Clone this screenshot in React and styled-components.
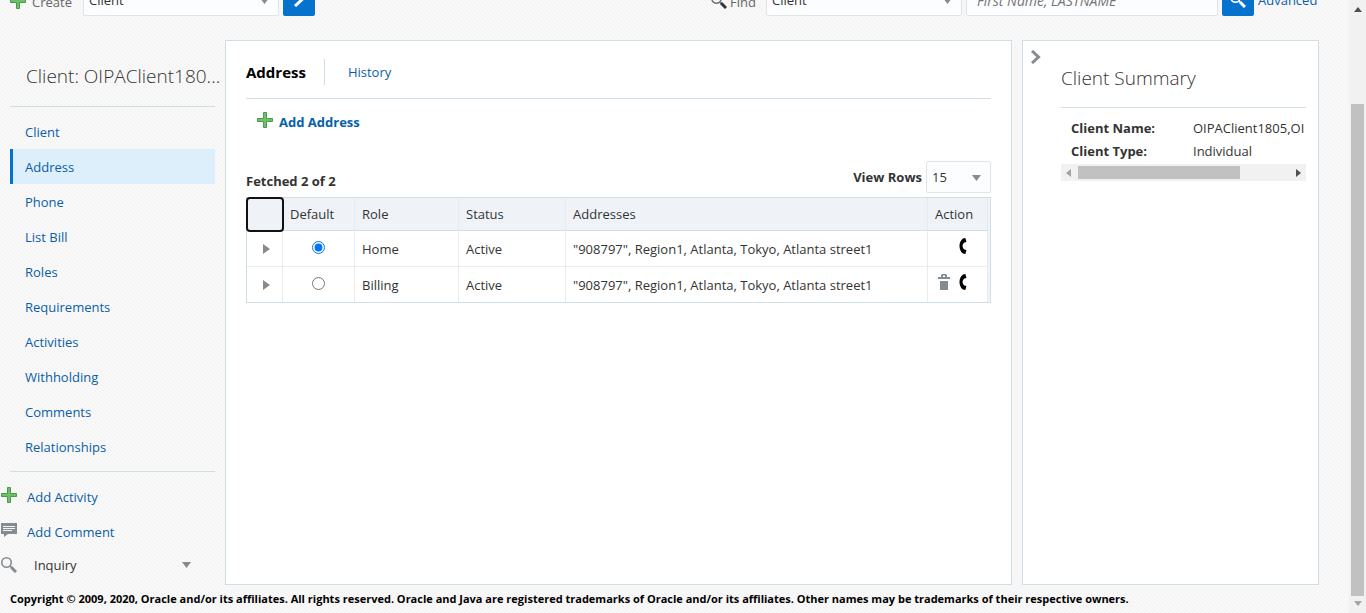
import React, { useState } from "react";
import styled, { createGlobalStyle, css } from "styled-components";

const GlobalStyle = createGlobalStyle`
  *, *::before, *::after { box-sizing: border-box; }
  body {
    margin: 0;
    color: #333;
    font: 13px/20px "Open Sans", "Noto Sans", "Liberation Sans", sans-serif;
    background: #f7f7f7;
  }
  a { color: #0a5ea6; text-decoration: none; }
  button { font: inherit; color: inherit; border: 0; padding: 0; background: none; cursor: pointer; }
`;

const line = "#d0dee7";

const Shell = styled.div`
  display: flex;
  min-height: 100vh;
  background: linear-gradient(45deg, #f3f3f3 12%, #f9f9f9 13% 49%, #f3f3f3 50% 62%, #f9f9f9 63%) 0 0 / 4px 4px;
`;

const Page = styled.div`
  flex: 1;
  min-width: 0;
  display: flex;
  flex-direction: column;
`;

const TopBar = styled.header`
  display: flex;
  align-items: flex-end;
  justify-content: space-between;
  height: 16px;
  padding: 0 30px 0 10px;
  overflow: hidden;
`;

const ToolGroup = styled.form`
  display: flex;
  align-items: center;
  gap: 4px;
  height: 32px;
`;

const ToolLabel = styled.label`
  display: flex;
  align-items: center;
  gap: ${(p) => p.$gap}px;
  margin-right: ${(p) => p.$after}px;
  padding-top: 4px;
  color: #666;
  svg { margin-top: -3px; }
`;

const SelectBox = styled.span`
  position: relative;
  display: block;
  width: ${(p) => p.$width}px;
  height: 32px;
`;

const Select = styled.select`
  appearance: none;
  width: 100%;
  height: 100%;
  padding: 0 5px;
  border: 1px solid #dfe4e7;
  border-radius: 2px;
  background: #fcfdfe;
  color: #333;
  font: inherit;
`;

const Caret = styled.svg`
  position: absolute;
  right: 10px;
  top: 50%;
  margin-top: -2px;
  pointer-events: none;
`;

const SearchInput = styled.input`
  width: 252px;
  height: 32px;
  padding: 0 10px;
  border: 1px solid #dfe4e7;
  border-radius: 2px;
  background: #fcfdfe;
  font: inherit;
  font-size: 14px;
  &::placeholder { color: #757575; font-style: italic; }
`;

const BlueButton = styled.button`
  display: grid;
  place-items: center;
  width: 32px;
  height: 32px;
  border-radius: 2px;
  background: #0572ce;
`;

const AdvancedLink = styled.a`
  width: 61px;
  white-space: nowrap;
`;

const Body = styled.div`
  flex: 1;
  display: flex;
  padding: 24px 30px 0 0;
`;

const Sidebar = styled.aside`
  flex: none;
  width: 225px;
`;

const ClientTitle = styled.h2`
  margin: 0 0 0 10px;
  height: 66px;
  padding: 22px 0 0 16px;
  font-size: 19px;
  line-height: 28px;
  font-weight: 300;
  white-space: nowrap;
`;

const NavList = styled.ul`
  list-style: none;
  margin: 0 10px;
  padding: 7px 0;
  border: solid ${line};
  border-width: 1px 0;
`;

const NavLink = styled.a`
  display: block;
  height: 35px;
  padding-left: 15px;
  padding-top: 1px;
  line-height: 34px;
  ${(p) =>
    p.$active &&
    css`
      padding-left: 12px;
      border-left: 3px solid #0572ce;
      background: #ddeffb;
    `}
`;

const SideActions = styled.div`
  padding-top: 7px;
`;

const SideLink = styled.a`
  display: flex;
  align-items: center;
  gap: 10px;
  height: 35px;
  padding-left: 1px;
  svg { margin-top: -3px; }
`;

const Inquiry = styled.button`
  display: flex;
  align-items: center;
  width: 191px;
  height: 32px;
  padding-left: 1px;
  text-align: left;
`;

const InquiryText = styled.span`
  flex: 1;
  padding-left: 17px;
`;

const Panel = styled.main`
  flex: 1;
  min-width: 0;
  padding: 0 20px;
  border: 1px solid ${line};
  background: #fff;
`;

const Tabs = styled.nav`
  display: flex;
  align-items: center;
  height: 58px;
  padding-top: 5px;
  border-bottom: 1px solid ${line};
`;

const Tab = styled.a`
  padding: 3px 23px 3px 0;
  & + & {
    padding-left: 23px;
  }
  ${(p) =>
    p.$active &&
    css`
      padding-right: 18px;
      border-right: 1px solid ${line};
      color: #000;
      font-size: 15px;
      font-weight: 700;
    `}
`;

const AddButton = styled.button`
  display: flex;
  align-items: center;
  gap: 6px;
  margin: 13px 0 0 11px;
  color: #0561a9;
  font-weight: 700;
  svg { margin-top: -4px; }
`;

const TableBar = styled.div`
  display: flex;
  align-items: flex-end;
  justify-content: space-between;
  height: 65px;
  padding-bottom: 4px;
  font-weight: 700;
`;

const Fetched = styled.span`
  padding-bottom: 2px;
`;

const RowsLabel = styled.label`
  display: flex;
  align-items: center;
  gap: 4px;
  font-weight: 700;
  select { font-weight: 400; }
`;

const TableFrame = styled.div`
  padding-right: 2px;
  border: 1px solid ${line};
  background: #f0f3f8;
`;

const Table = styled.table`
  width: 100%;
  table-layout: fixed;
  border-collapse: separate;
  border-spacing: 0;
`;

const Th = styled.th`
  width: ${(p) => (p.$width ? p.$width + "px" : "auto")};
  height: 33px;
  padding: 0 7px;
  border: solid ${line};
  border-width: 0 1px 1px 0;
  border-right-color: #e6eaee;
  background: #eff3f8;
  font-weight: 400;
  text-align: left;
  ${(p) => p.$focused && css`
    outline: 2px solid #111;
    outline-offset: -1px;
    border-radius: 3px;
  `}
`;

const Td = styled.td`
  height: 36px;
  padding: 0 7px;
  border: solid #ebebeb;
  border-width: 0 1px 1px 0;
  background: #fff;
  text-align: ${(p) => p.$align || "left"};
  tr:last-child > & {
    height: 35px;
    border-bottom: 0;
  }
`;

const Radio = styled.input`
  display: block;
  width: 13px;
  height: 13px;
  margin: 0 auto 3px;
`;

const IconButton = styled.button`
  display: block;
  margin: 0 auto;
  padding-left: 3px;
`;

const ActionSet = styled.div`
  display: flex;
  justify-content: flex-end;
  gap: 9px;
  padding: 0 13px 6px 0;
`;

const ActionButton = styled.button`
  display: block;
  height: 18px;
  svg { display: block; }
`;

const Summary = styled.aside`
  flex: none;
  display: flex;
  align-items: flex-start;
  width: 297px;
  margin-left: 10px;
  padding: 0 12px 0 7px;
  border: 1px solid ${line};
  background: #fff;
`;

const Collapse = styled.button`
  flex: none;
  width: 31px;
  padding-top: 9px;
  text-align: left;
  svg { display: block; }
`;

const SummaryContent = styled.section`
  flex: 1;
  min-width: 0;
`;

const SummaryTitle = styled.h2`
  height: 67px;
  margin: 0;
  padding-top: 23px;
  border-bottom: 1px solid ${line};
  font-size: 19px;
  line-height: 28px;
  font-weight: 300;
`;

const Details = styled.dl`
  display: grid;
  grid-template-columns: 122px 200px;
  margin: 0;
  padding: 9px 0 1px 10px;
  line-height: 23px;
  overflow: hidden;
  dt { font-weight: 700; }
  dd { margin: 0; }
`;

const HScroll = styled.div`
  display: flex;
  align-items: center;
  justify-content: space-between;
  height: 17px;
  padding: 0 5px;
  background: #f1f1f1;
`;

const HThumb = styled.div`
  width: 162px;
  height: 13px;
  margin: 0 auto 0 7px;
  background: #c1c1c1;
`;

const VScroll = styled.div`
  flex: none;
  display: flex;
  flex-direction: column;
  align-items: center;
  width: 17px;
  padding: 7px 0;
  background: #f1f1f1;
`;

const VThumb = styled.div`
  flex: 1;
  width: 13px;
  margin: 92px 0 5px;
  background: #c1c1c1;
`;

const Footer = styled.footer`
  height: 28px;
  padding-left: 10px;
  color: #000;
  font-size: 11px;
  line-height: 28px;
  font-weight: 700;
  white-space: nowrap;
`;

const Plus = () => (
  <svg width="16" height="16" viewBox="0 0 16 16" aria-hidden="true">
    <path d="M6.5.5h3v6h6v3h-6v6h-3v-6h-6v-3h6z" fill="#6cc067" stroke="#4b9a47" />
  </svg>
);

const Triangle = ({ dir = "down", color = "#868b90", as: Tag = "svg" }) => {
  const shapes = {
    down: [9, 6, "M0 0h9L4.5 6z"],
    right: [7, 10, "M0 0l7 5-7 5z"],
    barUp: [8, 5, "M4 0l4 5H0z"],
    barDown: [8, 5, "M0 0h8L4 5z"],
    barLeft: [5, 8, "M5 0v8L0 4z"],
    barRight: [5, 8, "M0 0l5 4-5 4z"],
  };
  const [w, h, d] = shapes[dir];
  return (
    <Tag width={w} height={h} viewBox={`0 0 ${w} ${h}`} aria-hidden="true">
      <path d={d} fill={color} />
    </Tag>
  );
};

const Magnifier = ({ ring, handle = ring }) => (
  <svg width="16" height="16" viewBox="0 0 16 16" aria-hidden="true">
    <circle cx="5.5" cy="5.5" r="4.7" fill="none" stroke={ring} strokeWidth="1.6" />
    <path d="M9 9l1.5 1.5" stroke={ring} strokeWidth="1.5" />
    <path d="M10 10l5 5" stroke={handle} strokeWidth="3" />
  </svg>
);

const Comment = () => (
  <svg width="16" height="14" viewBox="0 0 16 14" aria-hidden="true">
    <path d="M0 0h16v11H7l-4 3v-3H0z" fill="#868b90" />
    <path d="M2 3.5h12M2 5.5h12M2 7.5h9" stroke="#f5f5f5" />
  </svg>
);

const Trash = () => (
  <svg width="12" height="16" viewBox="0 0 12 16" aria-hidden="true">
    <path d="M3 1.500Q3 0 4.500 0h3Q9 0 9 1.500V3h3v2H0V3h3zM5 1.500V3h2V1.500zM2 7h8v9H2z" fillRule="evenodd" fill="#868b90" />
  </svg>
);

const Phone = () => (
  <svg width="8" height="16" viewBox="0 0 8 16" aria-hidden="true">
    <path d="M4 .4L6.400 0 7.400 4 5.400 4.500C3 6 3 10 5.400 11.500L7.400 12 6.400 16 4 15.600C-.7 12.500 -.7 3.500 4 .4z" fill="#000" />
  </svg>
);

const Chevron = ({ color }) => (
  <svg width="11" height="14" viewBox="0 0 11 14" aria-hidden="true">
    <path d="M2 1l6.500 6L2 13" fill="none" stroke={color} strokeWidth="3" />
  </svg>
);

const navItems = ["Client", "Address", "Phone", "List Bill", "Roles", "Requirements", "Activities", "Withholding", "Comments", "Relationships"];

const address = '"908797", Region1, Atlanta, Tokyo, Atlanta street1';
const rows = [
  { role: "Home", status: "Active", address },
  { role: "Billing", status: "Active", address, removable: true },
];

export default function App() {
  const [primary, setPrimary] = useState("Home");
  return (
    <>
      <GlobalStyle />
      <Shell>
        <Page>
          <TopBar>
            <ToolGroup onSubmit={(e) => e.preventDefault()}>
              <ToolLabel htmlFor="create" $gap={6} $after={7}><Plus />Create</ToolLabel>
              <SelectBox $width={196}>
                <Select id="create"><option>Client</option></Select>
                <Triangle as={Caret} />
              </SelectBox>
              <BlueButton aria-label="Create"><Chevron color="#fff" /></BlueButton>
            </ToolGroup>
            <ToolGroup onSubmit={(e) => e.preventDefault()}>
              <ToolLabel htmlFor="find" $gap={3} $after={6}><Magnifier ring="#777" handle="#333" />Find</ToolLabel>
              <SelectBox $width={196}>
                <Select id="find"><option>Client</option></Select>
                <Triangle as={Caret} />
              </SelectBox>
              <SearchInput aria-label="Name" placeholder="First Name, LASTNAME" />
              <BlueButton aria-label="Search"><Magnifier ring="#fff" /></BlueButton>
              <AdvancedLink href="#advanced">Advanced</AdvancedLink>
            </ToolGroup>
          </TopBar>
          <Body>
            <Sidebar>
              <ClientTitle>Client: OIPAClient180...</ClientTitle>
              <NavList>
                {navItems.map((item) => (
                  <li key={item}><NavLink href="#nav" $active={item === "Address"}>{item}</NavLink></li>
                ))}
              </NavList>
              <SideActions>
                <SideLink href="#activity"><Plus />Add Activity</SideLink>
                <SideLink href="#comment"><Comment />Add Comment</SideLink>
                <Inquiry><Magnifier ring="#868b90" /><InquiryText>Inquiry</InquiryText><Triangle /></Inquiry>
              </SideActions>
            </Sidebar>
            <Panel>
              <Tabs>
                <Tab href="#address" $active>Address</Tab>
                <Tab href="#history">History</Tab>
              </Tabs>
              <AddButton><Plus />Add Address</AddButton>
              <TableBar>
                <Fetched>Fetched 2 of 2</Fetched>
                <RowsLabel>
                  View Rows
                  <SelectBox $width={65}>
                    <Select><option>15</option></Select>
                    <Triangle as={Caret} />
                  </SelectBox>
                </RowsLabel>
              </TableBar>
              <TableFrame>
                <Table>
                  <thead>
                    <tr>
                      <Th $width={36} $focused />
                      <Th $width={72}>Default</Th>
                      <Th $width={104}>Role</Th>
                      <Th $width={107}>Status</Th>
                      <Th>Addresses</Th>
                      <Th $width={60}>Action</Th>
                    </tr>
                  </thead>
                  <tbody>
                    {rows.map((row) => (
                      <tr key={row.role}>
                        <Td><IconButton aria-label="Expand row"><Triangle dir="right" /></IconButton></Td>
                        <Td $align="center">
                          <Radio type="radio" name="default" aria-label={row.role} checked={primary === row.role} onChange={() => setPrimary(row.role)} />
                        </Td>
                        <Td>{row.role}</Td>
                        <Td>{row.status}</Td>
                        <Td>{row.address}</Td>
                        <Td>
                          <ActionSet>
                            {row.removable && <ActionButton aria-label="Delete"><Trash /></ActionButton>}
                            <ActionButton aria-label="Phone"><Phone /></ActionButton>
                          </ActionSet>
                        </Td>
                      </tr>
                    ))}
                  </tbody>
                </Table>
              </TableFrame>
            </Panel>
            <Summary>
              <Collapse aria-label="Collapse summary"><Chevron color="#868b90" /></Collapse>
              <SummaryContent>
                <SummaryTitle>Client Summary</SummaryTitle>
                <Details>
                  <dt>Client Name:</dt><dd>OIPAClient1805,OI</dd>
                  <dt>Client Type:</dt><dd>Individual</dd>
                </Details>
                <HScroll>
                  <Triangle dir="barLeft" color="#a3a3a3" />
                  <HThumb />
                  <Triangle dir="barRight" color="#505050" />
                </HScroll>
              </SummaryContent>
            </Summary>
          </Body>
          <Footer>
            Copyright © 2009, 2020, Oracle and/or its affiliates. All rights reserved. Oracle and Java are registered trademarks of Oracle and/or its affiliates. Other names may be trademarks of their respective owners.
          </Footer>
        </Page>
        <VScroll>
          <Triangle dir="barUp" color="#505050" />
          <VThumb />
          <Triangle dir="barDown" color="#a3a3a3" />
        </VScroll>
      </Shell>
    </>
  );
}
